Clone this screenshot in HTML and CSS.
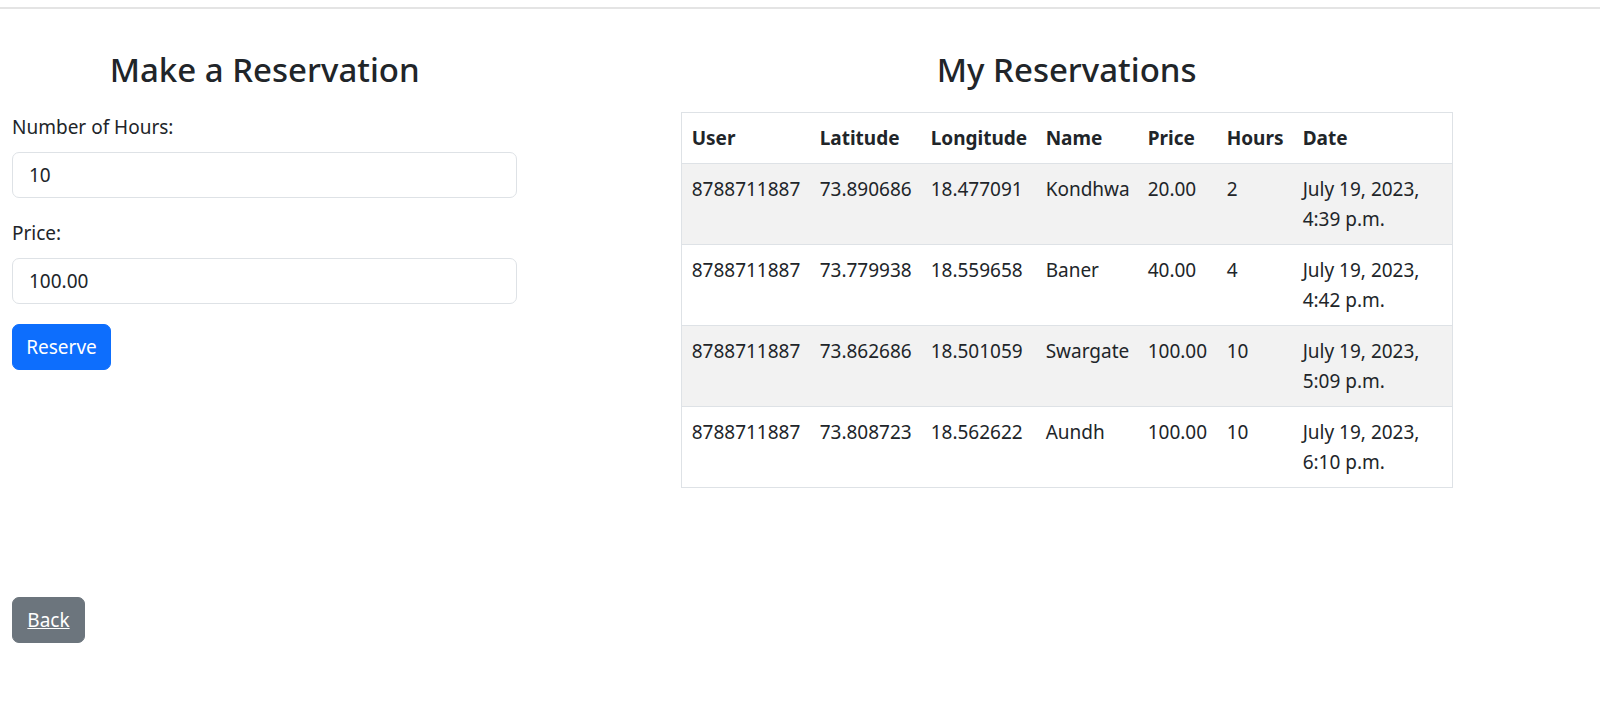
FILE: index.html
```html
<!DOCTYPE html>
<html lang="en">
<head>
<meta charset="utf-8">
<title>Reservations</title>
<link rel="stylesheet" href="styles.css">
</head>
<body>
<div class="topline"></div>
<div class="row">
  <div class="col col-left">
    <h2 class="title">Make a Reservation</h2>
    <form class="form">
      <div class="field">
        <label class="label" for="hours">Number of Hours:</label>
        <input class="input" id="hours" type="text" value="10">
      </div>
      <div class="field">
        <label class="label" for="price">Price:</label>
        <input class="input" id="price" type="text" value="100.00">
      </div>
      <button class="btn btn-primary btn-reserve" type="button">Reserve</button>
    </form>
  </div>
  <div class="col col-right">
    <h2 class="title">My Reservations</h2>
    <table class="table">
      <thead>
        <tr>
          <th class="c-user">User</th>
          <th class="c-lat">Latitude</th>
          <th class="c-lng">Longitude</th>
          <th class="c-name">Name</th>
          <th class="c-price">Price</th>
          <th class="c-hours">Hours</th>
          <th class="c-date">Date</th>
        </tr>
      </thead>
      <tbody>
        <tr class="striped">
          <td>8788711887</td><td>73.890686</td><td>18.477091</td><td>Kondhwa</td><td>20.00</td><td>2</td><td>July 19, 2023, 4:39 p.m.</td>
        </tr>
        <tr>
          <td>8788711887</td><td>73.779938</td><td>18.559658</td><td>Baner</td><td>40.00</td><td>4</td><td>July 19, 2023, 4:42 p.m.</td>
        </tr>
        <tr class="striped">
          <td>8788711887</td><td>73.862686</td><td>18.501059</td><td>Swargate</td><td>100.00</td><td>10</td><td>July 19, 2023, 5:09 p.m.</td>
        </tr>
        <tr>
          <td>8788711887</td><td>73.808723</td><td>18.562622</td><td>Aundh</td><td>100.00</td><td>10</td><td>July 19, 2023, 6:10 p.m.</td>
        </tr>
      </tbody>
    </table>
  </div>
</div>
<div class="footer">
  <a class="btn btn-secondary btn-back" href="#">Back</a>
</div>
</body>
</html>
```
FILE: styles.css
```css
html, body {
  margin: 0;
  padding: 0;
  background: #ffffff;
}
body {
  font-family: "Noto Sans", "Open Sans", sans-serif;
  font-size: 19px;
  line-height: 30px;
  color: #212529;
}
.topline {
  margin-top: 7px;
  height: 2px;
  background: #e4e4e4;
}
.row {
  display: flex;
}
.col {
  box-sizing: border-box;
  padding: 0 12px;
}
.col-left {
  width: 33.3333%;
  padding-right: 16px;
}
.col-right {
  width: 66.6667%;
}
.title {
  margin: 37px 0 18px;
  font-size: 33px;
  line-height: 48px;
  font-weight: 500;
  text-align: center;
  color: #212529;
}
.form {
  margin: 0;
}
.field {
  margin-bottom: 20px;
}
.label {
  display: block;
  margin-bottom: 10px;
}
.input {
  display: block;
  box-sizing: border-box;
  width: 100%;
  height: 46px;
  padding: 0 16px;
  border: 1px solid #dee2e6;
  border-radius: 7px;
  font-family: inherit;
  font-size: 19px;
  color: #212529;
  background: #fff;
}
.btn {
  display: inline-block;
  box-sizing: border-box;
  height: 46px;
  padding: 7px 0;
  border: 1px solid transparent;
  border-radius: 7px;
  font-family: inherit;
  font-size: 19px;
  line-height: 30px;
  text-align: center;
  color: #fff;
  cursor: pointer;
}
.btn-reserve {
  width: 99px;
}
.btn-back {
  width: 73px;
}
.btn-primary {
  background: #0d6efd;
  border-color: #0d6efd;
}
.btn-secondary {
  background: #6c757d;
  border-color: #6c757d;
  text-decoration: underline;
}
.table {
  box-sizing: border-box;
  width: 772px;
  margin: 0 auto;
  table-layout: fixed;
  border-collapse: separate;
  border-spacing: 0;
  border: 1px solid #dee2e6;
}
.table th,
.table td {
  padding: 10px;
  text-align: left;
  vertical-align: top;
}
.table th {
  font-weight: 700;
}
.table td {
  border-top: 1px solid #dee2e6;
}
.table .striped td {
  background: #f2f2f2;
}
.c-user { width: 108px; }
.c-lat { width: 91px; }
.c-lng { width: 95px; }
.c-name { width: 82px; }
.c-price { width: 59px; }
.c-hours { width: 56px; }
.c-date { width: 139px; }
.footer {
  padding: 0 12px;
  margin-top: 109px;
}
```
